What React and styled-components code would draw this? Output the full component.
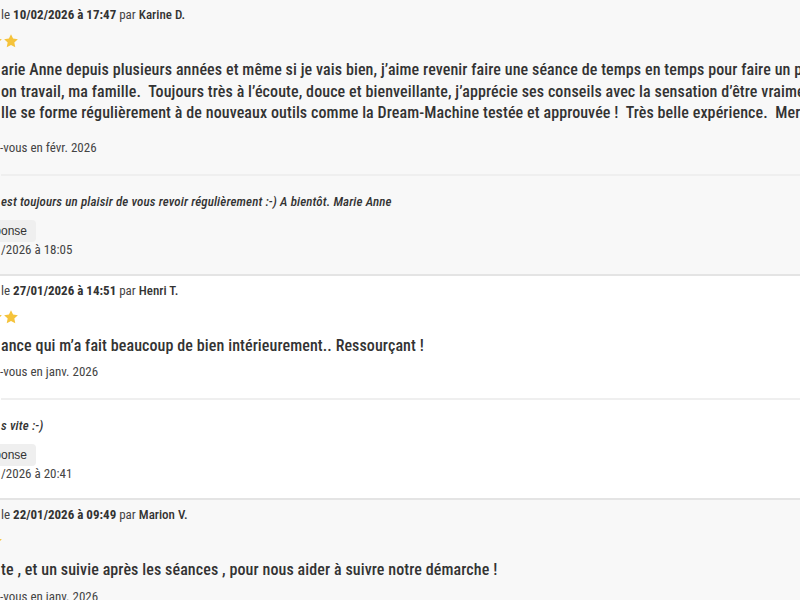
import React from 'react'
import styled, { createGlobalStyle } from 'styled-components'

const GlobalStyle = createGlobalStyle`
  html, body {
    margin: 0;
    padding: 0;
    background: #ffffff;
    overflow: hidden;
  }
  body {
    font-family: "Roboto Condensed", Roboto, "Liberation Sans", sans-serif;
    font-stretch: 75%;
    color: #333333;
  }
`

const reviews = [
  {
    date: '10/02/2026 à 17:47',
    author: 'Karine D.',
    stars: 5,
    tone: 'grey',
    lines: [
      'arie Anne depuis plusieurs années et même si je vais bien, j’aime revenir faire une séance de temps en temps pour faire un point sur ma vie,',
      'on travail, ma famille.  Toujours très à l’écoute, douce et bienveillante, j’apprécie ses conseils avec la sensation d’être vraiment écoutée.',
      'lle se forme régulièrement à de nouveaux outils comme la Dream-Machine testée et approuvée !  Très belle expérience.  Merci !',
    ],
    extra: true,
    visit: '-vous en févr. 2026',
    reply: 'est toujours un plaisir de vous revoir régulièrement :-) A bientôt. Marie Anne',
    replyDate: '/2026 à 18:05',
  },
  {
    date: '27/01/2026 à 14:51',
    author: 'Henri T.',
    stars: 5,
    tone: 'white',
    lines: ['ance qui m’a fait beaucoup de bien intérieurement.. Ressourçant !'],
    visit: '-vous en janv. 2026',
    reply: 's vite :-)',
    replyDate: '/2026 à 20:41',
  },
  {
    date: '22/01/2026 à 09:49',
    author: 'Marion V.',
    stars: 4,
    tone: 'grey',
    lines: ['te , et un suivie après les séances , pour nous aider à suivre notre démarche !'],
    visit: '-vous en janv. 2026',
  },
]

const Star = ({ filled }) => (
  <svg width="16" height="16" viewBox="0 0 24 24">
    <path
      d="M12 1.8l3.1 6.6 7.2.9-5.3 5 1.4 7.1L12 17.9l-6.4 3.5 1.4-7.1-5.3-5 7.2-.9z"
      fill={filled ? '#f5c33b' : '#e2e2e2'}
    />
  </svg>
)

const App = () => {
  return (
    <>
      <GlobalStyle />
      <List>
        {reviews.map((r, i) => (
          <Card key={i} $tone={r.tone}>
            <Meta>
              le <b>{r.date}</b> par <Author>{r.author}</Author>
            </Meta>
            <Stars>
              {Array.from({ length: r.stars }).map((_, k) => (
                <Star key={k} filled />
              ))}
            </Stars>
            <Body $extra={r.extra}>
              {r.lines.map((l, k) => (
                <Line key={k}>{l}</Line>
              ))}
            </Body>
            <Visit>{r.visit}</Visit>
            {r.reply && (
              <Reply>
                <ReplyText>{r.reply}</ReplyText>
                <ReplyTag>Réponse</ReplyTag>
                <ReplyDate>{r.replyDate}</ReplyDate>
              </Reply>
            )}
          </Card>
        ))}
      </List>
    </>
  )
}

const List = styled.div`
  display: flex;
  flex-direction: column;
  width: 800px;
  overflow: hidden;
`

const Card = styled.section`
  background: ${({ $tone }) => ($tone === 'grey' ? '#f8f8f8' : '#ffffff')};
  border-bottom: 2px solid #e4e4e4;
  padding: 6px 0 16px 1px;
`

const Meta = styled.div`
  font-size: 13px;
  line-height: 18px;
  color: #444444;
  white-space: nowrap;

  b {
    font-weight: 700;
    color: #333333;
  }
`

const Author = styled.span`
  font-weight: 500;
  color: #333333;
`

const Stars = styled.div`
  display: flex;
  margin: 9px 0 0 -62px;
  height: 16px;
`

const Body = styled.div`
  margin-top: 10px;
  margin-bottom: ${({ $extra }) => ($extra ? '15px' : '7px')};
  font-size: 16px;
  line-height: 21.5px;
  letter-spacing: 0.1px;
  font-weight: 500;
  color: #333333;
`

const Line = styled.div`
  white-space: pre;
`

const Visit = styled.div`
  font-size: 13px;
  line-height: 18px;
  color: #444444;
  margin-left: -1px;
`

const Reply = styled.div`
  margin-top: 17px;
  border-top: 2px solid #efefef;
  padding-top: 17px;
`

const ReplyText = styled.div`
  font-size: 13px;
  line-height: 18px;
  letter-spacing: 0.12px;
  font-style: italic;
  font-weight: 500;
  color: #333333;
  white-space: nowrap;
`

const ReplyTag = styled.div`
  display: inline-flex;
  align-items: center;
  height: 22px;
  margin: 9px 0 0 -31px;
  padding: 0 9px;
  border-radius: 4px;
  background: #efefef;
  font-family: "Liberation Sans", Arial, sans-serif;
  font-stretch: normal;
  font-size: 12px;
  color: #333333;
`

const ReplyDate = styled.div`
  font-size: 13px;
  line-height: 16px;
  color: #444444;
`

export default App
